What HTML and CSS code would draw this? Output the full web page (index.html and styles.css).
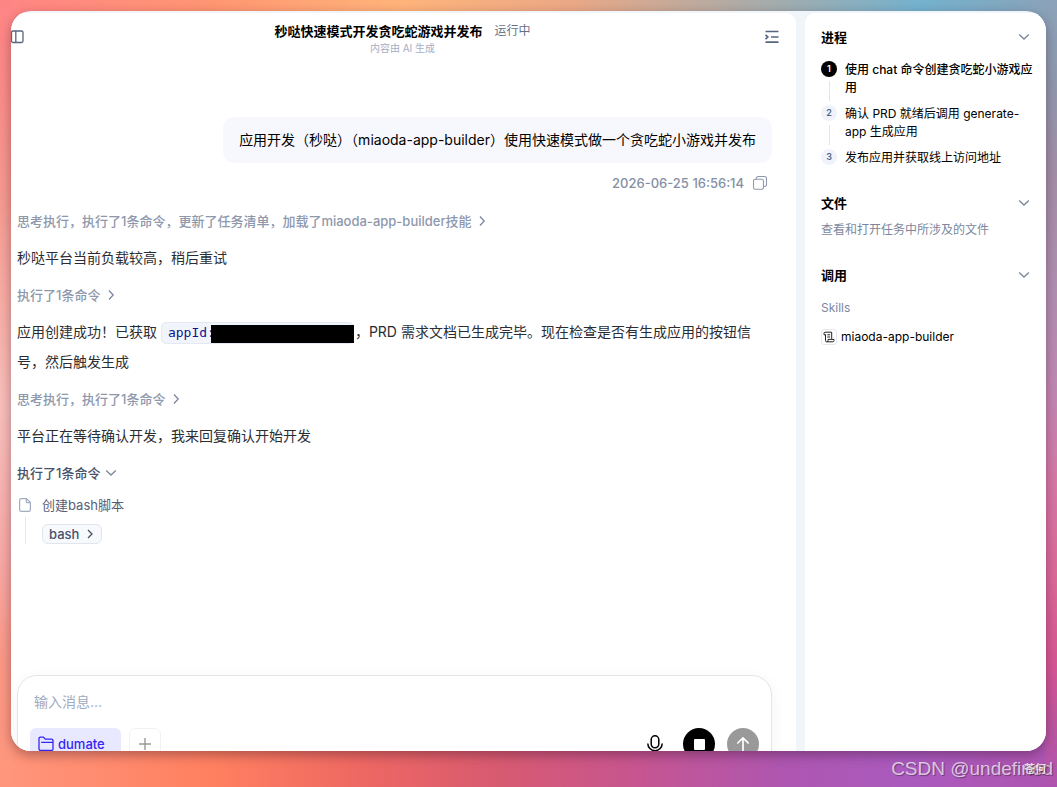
FILE: index.html
```html
<!DOCTYPE html>
<html lang="zh-CN">
<head>
<meta charset="utf-8">
<meta name="viewport" content="width=device-width, initial-scale=1">
<title>秒哒快速模式开发贪吃蛇游戏并发布</title>
<link rel="stylesheet" href="styles.css">
</head>
<body>
<div class="window">
  <main class="chat">
    <header class="chat-header">
      <button class="icon-btn" aria-label="展开侧栏">
        <svg width="16" height="16" viewBox="0 0 16 16" fill="none" stroke="currentColor" stroke-width="1.3"><rect x="2.5" y="2" width="11.500" height="11.500" rx="1.5"/><path d="M6.800 2v11.500"/></svg>
      </button>
      <div class="heading">
        <div class="heading-row"><h1>秒哒快速模式开发贪吃蛇游戏并发布</h1><span class="status">运行中</span></div>
        <p class="notice">内容由 AI 生成</p>
      </div>
      <button class="icon-btn" aria-label="收起面板">
        <svg width="16" height="16" viewBox="0 0 16 16" fill="none" stroke="currentColor" stroke-width="1.7"><path d="M1.500 2.500h13M7 8h7.500M1.500 13.200h13"/><path d="M1.500 5.800L3.800 8l-2.300 2.200"/></svg>
      </button>
    </header>

    <section class="thread">
      <div class="user-message">应用开发（秒哒）（miaoda-app-builder）使用快速模式做一个贪吃蛇小游戏并发布</div>
      <div class="message-meta">
        <time datetime="2026-06-25T16:56:14">2026-06-25 16:56:14</time>
        <button class="icon-btn copy" aria-label="复制">
          <svg width="16" height="16" viewBox="0 0 16 16" fill="none" stroke="currentColor" stroke-width="1.100"><rect x="1.500" y="4.300" width="10" height="10" rx="1.800"/><path d="M4.300 4.300V3.300A1.800 1.800 0 0 1 6.100 1.500h6.600a1.800 1.800 0 0 1 1.800 1.800v6.400a1.800 1.800 0 0 1-1.800 1.800h-1.200"/></svg>
        </button>
      </div>
      <div class="reply">
        <button class="trace">思考执行，执行了1条命令，更新了任务清单，加载了miaoda-app-builder技能<svg class="chev" viewBox="0 0 12 12"><path d="M4 1.500L8.200 6 4 10.500"/></svg></button>
        <p class="text">秒哒平台当前负载较高，稍后重试</p>
        <button class="trace">执行了1条命令<svg class="chev" viewBox="0 0 12 12"><path d="M4 1.500L8.200 6 4 10.500"/></svg></button>
        <p class="text">应用创建成功！已获取 <code class="code">appId:<span class="redacted"></span></code>，PRD 需求文档已生成完毕。现在检查是否有生成应用的按钮信号，然后触发生成</p>
        <button class="trace">思考执行，执行了1条命令<svg class="chev" viewBox="0 0 12 12"><path d="M4 1.500L8.200 6 4 10.500"/></svg></button>
        <p class="text">平台正在等待确认开发，我来回复确认开始开发</p>
        <button class="trace open" aria-expanded="true">执行了1条命令<svg class="chev" viewBox="0 0 12 12"><path d="M1.200 3.500L6 8l4.800-4.500"/></svg></button>
        <div class="call">
          <div class="call-rail">
            <svg width="16" height="16" viewBox="0 0 16 16" fill="none" stroke="currentColor" stroke-width="1.200" stroke-linejoin="round"><path d="M9.500 1.600H4.300A1.700 1.700 0 0 0 2.600 3.300v9.400a1.700 1.700 0 0 0 1.700 1.700h7.400a1.700 1.700 0 0 0 1.700-1.700V5.500z"/><path d="M9.300 1.800v2.900a1 1 0 0 0 1 1h3"/></svg>
          </div>
          <div class="call-body">
            <span class="call-name">创建bash脚本</span>
            <button class="tag">bash<svg class="chev" viewBox="0 0 12 12"><path d="M4 2L8 6 4 10"/></svg></button>
          </div>
        </div>
      </div>
    </section>

    <form class="composer">
      <input class="composer-input" type="text" placeholder="输入消息..." aria-label="输入消息">
      <div class="composer-bar">
        <button type="button" class="project">
          <svg width="16" height="16" viewBox="0 0 16 16" fill="none" stroke="currentColor" stroke-width="1.300" stroke-linejoin="round"><path d="M1 13V2.500A1.300 1.300 0 0 1 2.300 1.200h3.200l1.800 1.900h6.200A1.500 1.500 0 0 1 15 4.600V13a1.500 1.500 0 0 1-1.500 1.500h-11A1.500 1.500 0 0 1 1 13zM3.200 6.400h11.600"/></svg>
          dumate
        </button>
        <button type="button" class="add" aria-label="添加">
          <svg width="14" height="14" viewBox="0 0 14 14" fill="none" stroke="currentColor" stroke-width="1.400"><path d="M7 1v12M1 7h12"/></svg>
        </button>
        <div class="actions">
          <button type="button" class="icon-btn mic" aria-label="语音输入">
            <svg width="18" height="18" viewBox="0 0 18 18" fill="none" stroke="currentColor" stroke-width="1.500"><rect x="5.200" y=".8" width="7.600" height="12" rx="3.800"/><path d="M1.800 8.500a7.200 7.200 0 0 0 14.400 0M9 15.700V18"/></svg>
          </button>
          <button type="button" class="round stop" aria-label="停止"><span class="stop-mark"></span></button>
          <button type="submit" class="round send" aria-label="发送">
            <svg width="16" height="16" viewBox="0 0 16 16" fill="none" stroke="currentColor" stroke-width="1.700" stroke-linecap="round" stroke-linejoin="round"><path d="M8 14.500V2M2.800 7L8 1.800 13.200 7"/></svg>
          </button>
        </div>
      </div>
    </form>
  </main>

  <aside class="side">
    <section class="panel">
      <div class="panel-head"><h2>进程</h2><button class="icon-btn" aria-label="收起进程"><svg class="chev" viewBox="0 0 12 12"><path d="M1.200 3.500L6 8l4.800-4.500"/></svg></button></div>
      <ol class="steps">
        <li class="step current"><span class="num">1</span><span class="step-text">使用 chat 命令创建贪吃蛇小游戏应用</span></li>
        <li class="step"><span class="num">2</span><span class="step-text">确认 PRD 就绪后调用 generate-app 生成应用</span></li>
        <li class="step"><span class="num">3</span><span class="step-text">发布应用并获取线上访问地址</span></li>
      </ol>
    </section>
    <section class="panel">
      <div class="panel-head"><h2>文件</h2><button class="icon-btn" aria-label="收起文件"><svg class="chev" viewBox="0 0 12 12"><path d="M1.200 3.500L6 8l4.800-4.500"/></svg></button></div>
      <p class="hint">查看和打开任务中所涉及的文件</p>
    </section>
    <section class="panel">
      <div class="panel-head"><h2>调用</h2><button class="icon-btn" aria-label="收起调用"><svg class="chev" viewBox="0 0 12 12"><path d="M1.200 3.500L6 8l4.800-4.500"/></svg></button></div>
      <h3>Skills</h3>
      <div class="skill">
        <span class="skill-icon"><svg width="12" height="12" viewBox="0 0 12 12" fill="none" stroke="currentColor" stroke-width="1" stroke-linejoin="round"><path d="M2.500 3.500V9.500M1 3.800V2.500A1.200 1.200 0 0 1 2.200 1.200h6.500v6.600M1 3.800h1.600M4.300 3.800h2.800M4.300 6h2.800M2.500 9.400A1.300 1.300 0 0 0 3.800 10.800h6A1.300 1.300 0 0 0 11 9.500V8.400H5v1.200A1.200 1.200 0 0 1 3.800 10.800"/></svg></span>
        miaoda-app-builder
      </div>
    </section>
  </aside>
</div>
<div class="watermark">CSDN @undefined</div>
<div class="signature">苍何</div>
</body>
</html>
```

FILE: styles.css
```css
* { box-sizing: border-box; }

html { height: 100%; }

body {
  height: 100%;
  margin: 0;
  padding: 11px 11px 36px;
  overflow: hidden;
  position: relative;
  font-family: Inter, "Noto Sans CJK SC", sans-serif;
  font-size: 13px;
  color: #000;
  background:
    linear-gradient(180deg, #ff8585 0%, #fb8b88 10%, #f69a90 25%, #f8ada5 38%, #f8bfbb 52%, #f8aaa8 70%, #fb9886 84%, #ff967c 100%) left / 12px 100% no-repeat,
    linear-gradient(180deg, #8ba2b8 0%, #909ab0 10%, #a48fa8 22%, #b38fb2 38%, #c288b4 50%, #d977a6 62%, #dc6898 74%, #d85794 84%, #bc55a2 93%, #ae54b0 100%) right / 12px 100% no-repeat,
    linear-gradient(90deg, #ff8585 0%, #ff9672 20%, #ffb47a 38%, #eba886 54%, #a8acaa 72%, #74b2ce 87%, #8ba2b8 100%) top / 100% 50% no-repeat,
    linear-gradient(90deg, #ff967c 0%, #ff8060 20%, #ee6862 34%, #d85a70 47%, #c75590 60%, #ae56b0 74%, #aa5abe 86%, #ae54b0 100%) bottom / 100% 50% no-repeat;
}

h1, h2, h3, p, ol { margin: 0; padding: 0; }

button {
  border: 0;
  padding: 0;
  background: none;
  font: inherit;
  color: inherit;
  cursor: pointer;
}

svg { display: block; flex: none; }

.window {
  display: flex;
  gap: 9px;
  height: 100%;
  padding-top: 2px;
  overflow: hidden;
  border-radius: 20px;
  background: #f0f5fa;
  box-shadow: 0 4px 12px rgba(40, 10, 30, .36);
}

.chat {
  flex: 1;
  min-width: 0;
  display: flex;
  flex-direction: column;
  background: #fff;
  border-radius: 0 10px 0 0;
}

.icon-btn { display: flex; color: #7c879d; }

.chev {
  width: 12px;
  height: 12px;
  fill: none;
  stroke: currentColor;
  stroke-width: 1.3;
}

/* Header */
.chat-header {
  display: flex;
  justify-content: space-between;
  align-items: center;
  height: 48px;
  padding-right: 16px;
  margin-left: -2px;
}

.chat-header .icon-btn { color: #566580; }

.heading { flex: 1; margin-left: 16px; padding-top: 2px; }

.heading-row { display: flex; justify-content: center; align-items: center; gap: 12px; }

.heading h1 { font-size: 13px; font-weight: 600; line-height: 20px; }

.status { font-size: 12px; line-height: 20px; color: #667085; }

.notice { font-size: 10px; line-height: 14px; text-align: center; color: #a4aec4; }

/* Conversation */
.thread {
  flex: 1;
  min-height: 0;
  padding: 56px 24px 0 6px;
  display: flex;
  flex-direction: column;
}

.user-message {
  align-self: flex-end;
  padding: 11px 16px 12px;
  border-radius: 12px;
  background: #f7f8fd;
  font-size: 14px;
  line-height: 23px;
}

.message-meta {
  display: flex;
  justify-content: flex-end;
  align-items: center;
  gap: 8px;
  padding: 12px 4px 0 0;
  font-weight: 500;
  line-height: 16px;
  color: #8490a5;
}

.message-meta .copy { color: #8e99ad; }

.reply {
  display: flex;
  flex-direction: column;
  align-items: flex-start;
  gap: 12px;
  padding-top: 20px;
}

.trace {
  display: flex;
  align-items: center;
  gap: 5px;
  font-weight: 500;
  line-height: 20px;
  color: #8e98ac;
}

.trace.open { color: #475269; }

.trace .chev { color: #7c879d; }

.text {
  padding-right: 12px;
  font-size: 14px;
  line-height: 30px;
  color: #2b2d33;
}

.code {
  display: inline-flex;
  align-items: center;
  height: 22px;
  margin-right: 1px;
  padding-left: 6px;
  border: 1px solid #e3e8f1;
  border-radius: 5px;
  background: #f1f4fa;
  font-family: "DejaVu Sans Mono", monospace;
  font-size: 13px;
  line-height: 20px;
  color: #12128c;
  vertical-align: middle;
}

.redacted {
  width: 143px;
  height: 18px;
  margin: 1px -1px 0 -4px;
  background: #000;
}

.call { display: flex; gap: 9px; color: #566178; }

.call-rail {
  display: flex;
  flex-direction: column;
  align-items: center;
  gap: 4px;
  padding-top: 2px;
  color: #a1abc1;
}

.call-rail::after { content: ""; flex: 1; width: 1px; background: #e4e7ee; }

.call-body {
  display: flex;
  flex-direction: column;
  align-items: flex-start;
  gap: 9px;
}

.call-name { line-height: 20px; }

.tag {
  display: flex;
  align-items: center;
  gap: 5px;
  height: 20px;
  padding: 0 5px 0 6px;
  border: 1px solid #e0e5ee;
  border-radius: 6px;
  background: #f7f9fd;
  color: #475269;
  font-weight: 500;
}

/* Composer */
.composer {
  flex: none;
  margin: 0 24px -22px 6px;
  padding: 12px;
  border: 1px solid #e3e5ea;
  border-radius: 20px;
  background: #fff;
  box-shadow: 0 4px 16px rgba(30, 40, 80, .05);
}

.composer-input {
  display: block;
  width: 100%;
  height: 26px;
  padding: 0 4px;
  border: 0;
  outline: 0;
  background: none;
  font: inherit;
  font-size: 14px;
}

.composer-input::placeholder { color: #a0aabf; opacity: 1; }

.composer-bar { display: flex; gap: 8px; padding-top: 14px; }

.project {
  display: flex;
  align-items: center;
  gap: 4px;
  height: 32px;
  padding: 0 16px 0 8px;
  border-radius: 6px;
  background: #e8e8ff;
  color: #3525f5;
  font-weight: 500;
}

.add {
  display: grid;
  place-items: center;
  width: 32px;
  height: 32px;
  border: 1px solid #f1f2f4;
  border-radius: 6px;
  color: #999;
}

.actions { display: flex; align-items: center; gap: 12px; margin-left: auto; }

.mic { color: #000; margin-right: 7px; }

.round {
  display: grid;
  place-items: center;
  width: 32px;
  height: 32px;
  border-radius: 50%;
  color: #fff;
}

.stop { background: #000; }

.stop-mark { width: 11px; height: 11px; border-radius: 1px; background: #fff; }

.send { background: #999; }

/* Side column */
.side {
  flex: none;
  width: 241px;
  padding: 14px 12px 0 16px;
  display: flex;
  flex-direction: column;
  gap: 26px;
  background: #fff;
  border-radius: 10px 0 0 0;
  font-size: 12px;
}

.panel-head {
  display: flex;
  justify-content: space-between;
  align-items: center;
  padding-right: 4px;
}

.panel h2 { font-size: 13px; font-weight: 600; line-height: 20px; }

.steps {
  display: flex;
  flex-direction: column;
  gap: 8px;
  padding-top: 14px;
  list-style: none;
}

.step { display: flex; gap: 8px; position: relative; line-height: 18px; }

.step:not(:last-child)::before {
  content: "";
  position: absolute;
  left: 8px;
  top: 20px;
  bottom: -4px;
  width: 1px;
  background: #e2e4e9;
}

.step-text { flex: 1; }

.current .step-text { font-weight: 500; }

.num {
  flex: none;
  width: 16px;
  height: 16px;
  border-radius: 50%;
  background: #f0f3fb;
  color: #566580;
  font-size: 9px;
  font-weight: 600;
  line-height: 16px;
  text-align: center;
}

.current .num { background: #000; color: #fff; }

.hint { padding-top: 7px; line-height: 19px; color: #7c879d; }

.panel h3 {
  padding-top: 13px;
  font-size: 12px;
  font-weight: 400;
  line-height: 20px;
  color: #7c879d;
}

.skill { display: flex; align-items: center; gap: 4px; padding-top: 9px; line-height: 20px; }

.skill-icon {
  display: grid;
  place-items: center;
  width: 16px;
  height: 16px;
  border: 1px solid #e6e8f0;
  border-radius: 3px;
  color: #222;
}

/* Marks over the backdrop */
.watermark {
  position: absolute;
  right: 4px;
  bottom: 6px;
  font: 19px/24px "Liberation Sans", Arial, sans-serif;
  color: rgba(255, 255, 255, .7);
  text-shadow: 1px 1px 1px rgba(0, 0, 0, .35);
}

.signature {
  position: absolute;
  right: 11px;
  bottom: 10px;
  font-size: 11px;
  font-weight: 700;
  line-height: 16px;
  color: rgba(255, 255, 255, .8);
  text-shadow: 1px 1px 1px rgba(0, 0, 0, .5);
}
```
